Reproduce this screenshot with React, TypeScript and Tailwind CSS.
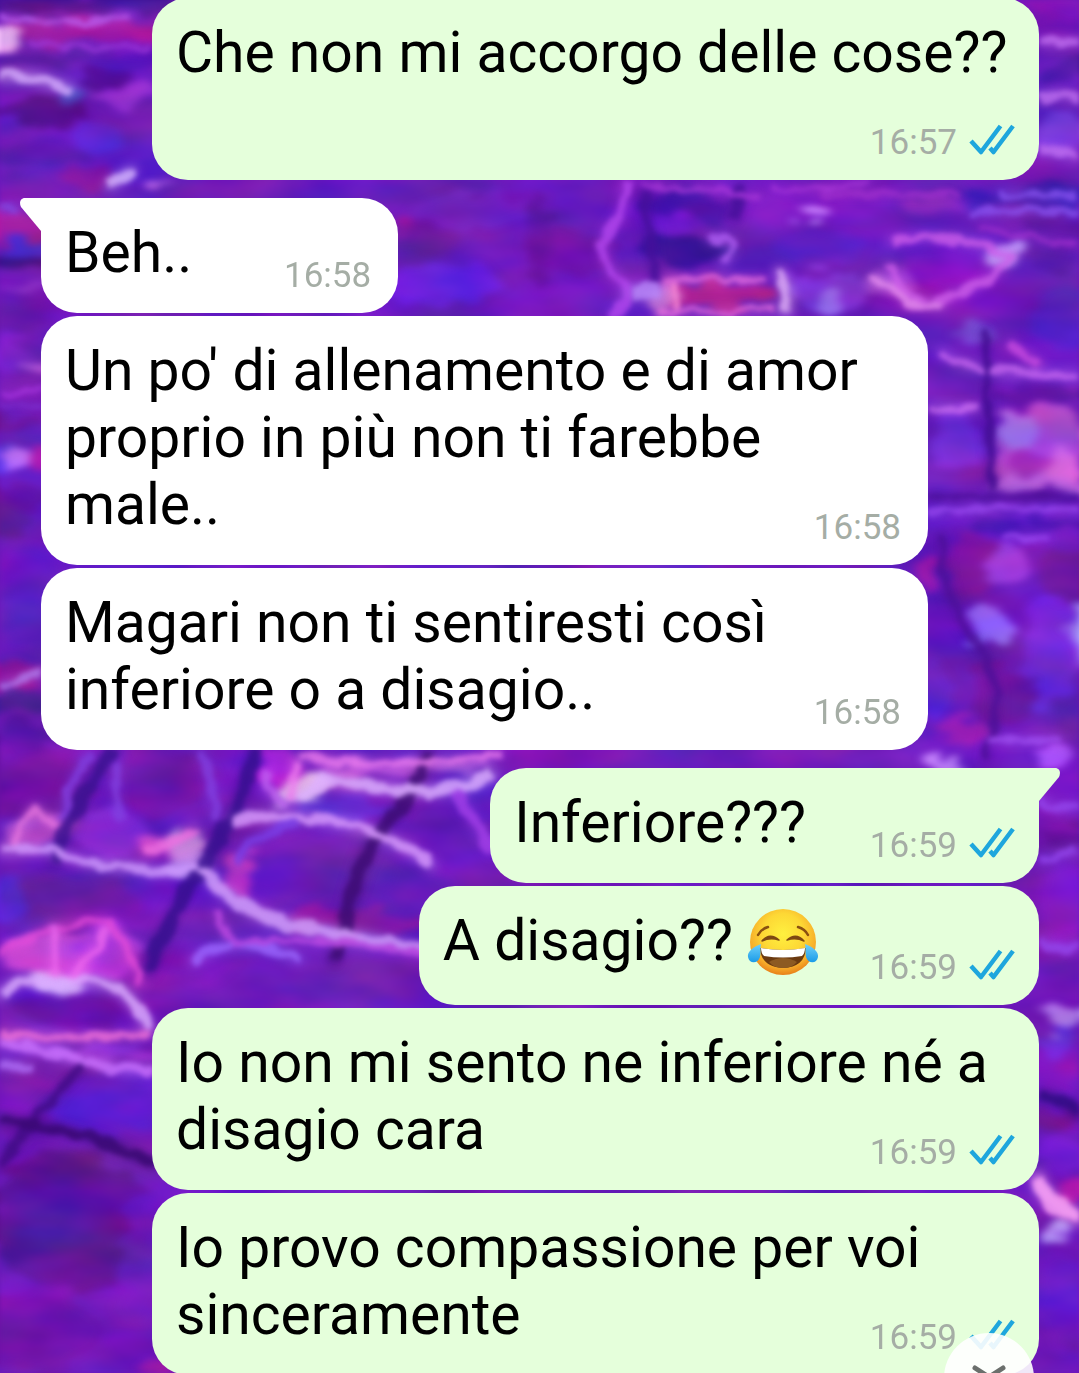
import React from 'react';

type Message = {
  text: string;
  time: string;
  mine?: boolean;
  first?: boolean;
  laughing?: boolean;
  spacer: string;
};

const messages: Message[] = [
  { text: 'Che non mi accorgo delle cose??', time: '16:57', mine: true, spacer: 'w-[208px]' },
  { text: 'Beh..', time: '16:58', first: true, spacer: 'w-[181px]' },
  { text: "Un po' di allenamento e di amor proprio in più non ti farebbe male..", time: '16:58', spacer: 'w-[181px]' },
  { text: 'Magari non ti sentiresti così inferiore o a disagio..', time: '16:58', spacer: 'w-[181px]' },
  { text: 'Inferiore???', time: '16:59', mine: true, first: true, spacer: 'w-[208px]' },
  { text: 'A disagio?? ', time: '16:59', mine: true, laughing: true, spacer: 'w-[195px]' },
  { text: 'Io non mi sento ne inferiore né a disagio cara', time: '16:59', mine: true, spacer: 'w-[208px]' },
  { text: 'Io provo compassione per voi sinceramente', time: '16:59', mine: true, spacer: 'w-[208px]' },
];

// cx, cy, rx, ry, colour, opacity
const glows: [number, number, number, number, string, number][] = [
  [80, 3, 110, 10, '#3a1090', 0.9],
  [75, 32, 80, 12, '#a810a0', 0.9],
  [4, 38, 16, 10, '#ffc8ff', 1],
  [75, 60, 100, 9, '#4a16a8', 0.8],
  [45, 112, 40, 15, '#4a0a78', 0.9],
  [104, 76, 26, 8, '#48067c', 0.9],
  [73, 96, 12, 9, '#3c50c8', 0.8],
  [130, 94, 36, 9, '#a838e0', 0.8],
  [95, 134, 22, 14, '#5828d8', 0.8],
  [40, 155, 50, 16, '#4c18a8', 0.8],
  [90, 180, 30, 12, '#901098', 0.9],
  [155, 185, 12, 7, '#f080f0', 0.8],
  [18, 228, 44, 14, '#b418a4', 1],
  [30, 247, 34, 7, '#5c28e0', 1],
  [20, 263, 40, 9, '#400c88', 1],
  [28, 286, 30, 5, '#8838d0', 0.9],
  [20, 315, 34, 20, '#6818a4', 0.8],
  [10, 352, 28, 14, '#8020d8', 0.9],
  [34, 367, 16, 6, '#c058f0', 1],
  [10, 422, 34, 8, '#700c88', 0.8],
  [32, 435, 24, 12, '#5020b8', 0.7],
  [2, 461, 16, 12, '#5c38e8', 1],
  [20, 461, 14, 8, '#d078ff', 1],
  [42, 460, 12, 14, '#b014a4', 1],
  [20, 495, 36, 12, '#700c90', 0.8],
  [8, 520, 24, 16, '#601888', 0.8],
  [30, 600, 26, 50, '#5c18bc', 0.9],
  [10, 676, 32, 11, '#980c98', 1],
  [20, 702, 40, 14, '#3c1c9c', 1],
  [20, 738, 50, 14, '#54109c', 0.9],
  [440, 285, 60, 20, '#701ee8', 0.9],
  [480, 210, 70, 16, '#7828d8', 0.7],
  [404, 225, 12, 14, '#b010a0', 0.9],
  [420, 240, 40, 16, '#701898', 0.5],
  [570, 250, 50, 20, '#700c98', 0.8],
  [540, 240, 14, 50, '#540c88', 0.6],
  [690, 205, 50, 14, '#3c14a0', 0.9],
  [685, 250, 44, 16, '#30109c', 1],
  [665, 228, 30, 9, '#8020d8', 0.8],
  [718, 295, 56, 12, '#c81888', 1],
  [665, 295, 8, 18, '#ff90d8', 0.8],
  [820, 245, 46, 18, '#6020d0', 0.7],
  [812, 211, 16, 10, '#c098ff', 1],
  [830, 290, 40, 18, '#9040f0', 0.8],
  [832, 300, 12, 9, '#b090ff', 0.8],
  [950, 265, 46, 22, '#7c10c0', 0.8],
  [1008, 256, 20, 11, '#d0a8ff', 1],
  [1030, 197, 60, 11, '#3418b0', 0.9],
  [930, 205, 34, 9, '#a828c8', 0.8],
  [1050, 240, 30, 30, '#5a0e98', 0.8],
  [890, 282, 26, 12, '#c050e0', 0.7],
  [977, 331, 16, 15, '#7058d8', 0.8],
  [1060, 320, 30, 30, '#5028c8', 0.7],
  [1040, 393, 55, 12, '#4a10a0', 0.9],
  [1040, 448, 50, 42, '#d060e0', 0.8],
  [1020, 430, 22, 16, '#b890f8', 0.8],
  [1060, 465, 22, 16, '#f088e8', 0.7],
  [1030, 460, 16, 16, '#a020b0', 0.6],
  [955, 440, 22, 36, '#8030e8', 0.7],
  [1040, 484, 60, 7, '#d078f0', 0.9],
  [970, 508, 60, 6, '#4810a0', 0.8],
  [1030, 525, 60, 8, '#4410a0', 0.9],
  [970, 565, 30, 34, '#901498', 0.8],
  [930, 570, 10, 20, '#c018a8', 0.9],
  [1010, 568, 18, 24, '#a848f0', 0.8],
  [1066, 575, 22, 30, '#6c1890', 0.9],
  [989, 628, 21, 22, '#9878ff', 1],
  [1080, 630, 10, 28, '#b0b0ff', 1],
  [1050, 650, 28, 60, '#7828f0', 0.7],
  [1004, 695, 34, 34, '#780c94', 0.8],
  [935, 690, 12, 34, '#5c28e0', 0.7],
  [1074, 720, 14, 30, '#5c18a8', 0.8],
  [965, 732, 24, 12, '#b01ca8', 0.9],
  [940, 762, 22, 8, '#d8a0ff', 0.9],
  [1055, 757, 16, 9, '#b860ff', 0.9],
  [160, 780, 50, 36, '#7c10a0', 0.8],
  [110, 835, 34, 24, '#9030e0', 0.8],
  [30, 785, 60, 34, '#68109c', 0.8],
  [40, 828, 34, 16, '#d860d8', 0.7],
  [170, 846, 32, 12, '#e858d8', 0.9],
  [186, 850, 18, 24, '#d0a8f0', 0.9],
  [278, 770, 20, 20, '#d028d8', 0.9],
  [305, 790, 30, 14, '#fff0ff', 0.9],
  [400, 768, 90, 9, '#d868e8', 0.7],
  [350, 808, 50, 10, '#5830d8', 0.8],
  [315, 868, 80, 40, '#661cb8', 0.9],
  [240, 875, 18, 22, '#e838b8', 0.9],
  [370, 922, 80, 14, '#a014a0', 0.9],
  [410, 890, 40, 30, '#541cb4', 0.8],
  [70, 900, 70, 26, '#7c14a8', 0.8],
  [6, 900, 20, 24, '#5c24e0', 0.9],
  [190, 960, 46, 20, '#7814c0', 0.8],
  [55, 955, 50, 28, '#e850e0', 0.9],
  [110, 950, 28, 30, '#b838e8', 0.9],
  [70, 1010, 56, 16, '#68109c', 1],
  [55, 984, 24, 9, '#fff0ff', 0.8],
  [110, 1053, 60, 9, '#9838e8', 0.9],
  [110, 1105, 60, 34, '#5a1cd0', 0.8],
  [20, 1095, 34, 20, '#7814b8', 0.8],
  [70, 1220, 80, 70, '#5c108c', 0.9],
  [140, 1260, 20, 70, '#6020c8', 0.7],
  [30, 1330, 70, 46, '#7010a4', 0.8],
  [155, 1368, 18, 12, '#b020a8', 0.8],
  [1065, 1020, 20, 13, '#c0a0ff', 0.9],
  [1058, 1042, 20, 12, '#5c38e8', 0.8],
  [1060, 1075, 22, 12, '#8010b0', 0.9],
  [1050, 1120, 28, 12, '#70148c', 0.9],
  [1065, 1155, 24, 20, '#8018d8', 0.8],
  [1072, 1195, 14, 12, '#c018b0', 0.9],
  [1057, 1230, 15, 12, '#c8b0ff', 1],
  [1065, 1300, 30, 50, '#7414c8', 0.8],
  [1065, 900, 26, 40, '#7418d0', 0.8],
  [1065, 840, 24, 12, '#48109c', 0.8],
  [1060, 10, 34, 12, '#8818b0', 0.8],
  [1064, 70, 30, 12, '#401498', 0.9],
  [1062, 130, 30, 18, '#9048e8', 0.7],
];

// path, colour, stroke width
const strands: [string, string, number][] = [
  ['M0 17C40 26 80 24 130 15', '#b860f0', 5],
  ['M30 42Q90 52 150 46', '#9c38d8', 5],
  ['M0 76C30 74 50 82 72 90', '#d8b0ff', 9],
  ['M110 184L132 171', '#d8b8ff', 10],
  ['M0 392L41 390', '#a838e0', 6],
  ['M0 405H41', '#7c30d0', 4],
  ['M0 686L41 673', '#b080f0', 6],
  ['M0 208H20', '#8448e0', 7],
  ['M627 183C622 200 628 215 610 228C598 242 602 268 622 282C630 294 625 305 612 315', '#b448ee', 8],
  ['M645 192L655 282M740 185L735 220', '#45109a', 9],
  ['M710 240C740 235 735 254 722 264', '#b060f4', 7],
  ['M665 279H765M660 310Q710 314 775 308', '#ec70e0', 5],
  ['M674 282V308', '#ff90d8', 6],
  ['M779 272Q791 290 786 312', '#e0b0f8', 10],
  ['M632 292H658', '#b888f8', 14],
  ['M770 188Q820 194 870 182M640 184Q700 188 760 197', '#a838d8', 5],
  ['M890 241C930 233 970 236 1012 257C990 282 950 300 930 304C910 300 895 282 888 265', '#cf60ea', 7],
  ['M870 282Q895 280 908 304L942 305', '#e890f0', 7],
  ['M970 212H1079M1000 195H1079', '#8a54f0', 6],
  ['M980 228L1079 246M820 195H960', '#a030cc', 5],
  ['M940 352C970 374 1010 372 1079 376', '#c868f0', 7],
  ['M930 408H978', '#cc70f0', 6],
  ['M1010 345L1040 365', '#c84ce0', 8],
  ['M985 330Q990 430 993 490', '#400c90', 6],
  ['M928 497H1079', '#4b1098', 5],
  ['M928 514Q1000 504 1079 512M1005 537H1048', '#9a48f0', 6],
  ['M942 535Q940 600 975 640T986 760', '#4c1098', 7],
  ['M990 740H1060', '#a050f0', 6],
  ['M90 752Q70 780 62 820M200 752Q214 775 214 820M118 765Q112 800 122 820', '#8140e0', 8],
  ['M255 750C245 800 220 840 195 878S165 930 148 970', '#35108e', 12],
  ['M114 748Q75 800 54 862', '#3a1290', 11],
  ['M428 752C420 785 392 818 375 838C356 865 352 905 334 960', '#3c0c72', 12],
  ['M0 850H50C80 864 110 867 135 867Q160 878 200 866', '#d09cff', 8],
  ['M10 846L34 808L58 826', '#e878e0', 7],
  ['M145 852Q175 845 195 828', '#f070e0', 8],
  ['M232 820C280 812 350 818 388 839Q412 850 432 866', '#dca0ff', 8],
  ['M236 862Q260 828 296 823', '#7a40e8', 9],
  ['M204 868C220 898 245 904 270 920Q330 932 430 952', '#d2a0fc', 11],
  ['M300 797L325 778Q350 784 400 790T492 775', '#ddb0ff', 11],
  ['M296 762L292 798M300 756Q390 774 500 754', '#ec7cee', 7],
  ['M270 770Q255 795 290 805', '#bd60f0', 7],
  ['M455 790L492 850', '#a340e8', 10],
  ['M192 962Q235 930 300 960', '#9c68ff', 8],
  ['M215 910L232 945Q310 932 430 955', '#c14ce4', 6],
  ['M0 955Q50 920 110 922Q130 950 140 985', '#e44cd8', 7],
  ['M72 978L108 930M53 925V975', '#ee68ee', 7],
  ['M0 995Q20 974 40 982L58 989L76 980Q110 980 126 994L150 1028', '#dcaeff', 9],
  ['M0 1034Q70 1040 150 1034', '#f474d8', 7],
  ['M0 1044C40 1042 80 1070 152 1070', '#cc74ff', 9],
  ['M0 1064L30 1068', '#b070f8', 7],
  ['M84 1066Q40 1110 30 1124Q18 1140 0 1168', '#400c84', 8],
  ['M0 1120Q90 1130 154 1164', '#35086e', 9],
  ['M1040 1095Q1060 1098 1079 1114', '#2e0c80', 11],
  ['M1038 1178Q1040 1198 1079 1218', '#ffa8f8', 14],
  ['M1040 800Q1060 815 1079 805M1040 860L1079 850M1040 940Q1065 955 1079 945', '#9448ee', 8],
  ['M1040 42H1079M1040 98Q1060 90 1079 100M1040 150L1079 156', '#c070f0', 8],
];

const Strands = () => (
  <>
    {strands.map(([d, stroke, width], i) => (
      <path key={i} d={d} stroke={stroke} strokeWidth={width} />
    ))}
  </>
);

const Wallpaper = () => (
  <svg
    className="absolute inset-0 h-full w-full"
    viewBox="0 0 1079 1373"
    preserveAspectRatio="xMidYMid slice"
    aria-hidden="true"
  >
    <defs>
      <filter id="grain" x="0" y="0" width="100%" height="100%" colorInterpolationFilters="sRGB">
        <feTurbulence type="fractalNoise" baseFrequency="0.01 0.022" numOctaves="3" seed="8" />
        <feColorMatrix values="1.5 0 0 0 -0.3  0 0.6 0 0 -0.14  0 0 1.2 0 0.15  0 0 0 0 1" />
        <feGaussianBlur stdDeviation="2" />
      </filter>
      <filter id="soft" filterUnits="userSpaceOnUse" x="-40" y="-40" width="1160" height="1460" colorInterpolationFilters="sRGB">
        <feTurbulence type="fractalNoise" baseFrequency="0.03 0.05" numOctaves="3" seed="5" />
        <feDisplacementMap in="SourceGraphic" scale="34" xChannelSelector="R" yChannelSelector="G" />
        <feGaussianBlur stdDeviation="5 3" />
      </filter>
      <filter id="halo" filterUnits="userSpaceOnUse" x="0" y="0" width="1079" height="1373" colorInterpolationFilters="sRGB">
        <feGaussianBlur stdDeviation="6" />
      </filter>
      <filter id="wavy" filterUnits="userSpaceOnUse" x="0" y="0" width="1079" height="1373" colorInterpolationFilters="sRGB">
        <feTurbulence type="fractalNoise" baseFrequency="0.05" numOctaves="2" seed="3" />
        <feDisplacementMap in="SourceGraphic" scale="14" xChannelSelector="R" yChannelSelector="G" />
        <feGaussianBlur stdDeviation="2.6" />
      </filter>
    </defs>
    <rect width="1079" height="1373" fill="#6a18ba" />
    <g filter="url(#soft)">
      {glows.map(([cx, cy, rx, ry, fill, opacity], i) => (
        <ellipse key={i} cx={cx} cy={cy} rx={rx} ry={ry} fill={fill} opacity={opacity} />
      ))}
    </g>
    <rect width="1079" height="1373" filter="url(#grain)" opacity="0.22" />
    <g fill="none" strokeLinecap="round" opacity="0.7" filter="url(#halo)">
      <Strands />
    </g>
    <g fill="none" strokeLinecap="butt" opacity="0.72" filter="url(#wavy)">
      <Strands />
    </g>
  </svg>
);

const ReadTicks = () => (
  <svg className="h-[42px] w-[46px]" viewBox="0 0 46 42" fill="none" stroke="#1ea6dd" strokeWidth="4.500" role="img" aria-label="Letto">
    <path d="M2 19L12 30L31.500 4M21 26L24.500 30L44 4" strokeLinejoin="round" />
  </svg>
);

const Tail = ({ mine }: { mine?: boolean }) => (
  <svg
    className={mine ? 'absolute top-0 left-full h-[33px] w-[21px] -scale-x-100' : 'absolute top-0 right-full h-[33px] w-[21px]'}
    viewBox="0 0 21 33"
    fill={mine ? '#e5ffdb' : '#ffffff'}
    aria-hidden="true"
  >
    <path d="M21 0H5C0 0-1 5 1 9L21 33Z" />
  </svg>
);

const JoyFace = () => (
  <svg className="inline-block h-[71px] w-[72px] align-[-18px]" viewBox="0 0 72 71" role="img" aria-label="😂">
    <defs>
      <radialGradient id="face" cx="0.5" cy="0.38" r="0.62">
        <stop offset="0" stopColor="#fff03f" />
        <stop offset="0.5" stopColor="#fdd835" />
        <stop offset="0.82" stopColor="#f7ad2a" />
        <stop offset="1" stopColor="#e8801a" />
      </radialGradient>
      <linearGradient id="tear" x1="0" y1="0" x2="0" y2="1">
        <stop offset="0" stopColor="#6fd0fa" />
        <stop offset="1" stopColor="#1a9be8" />
      </linearGradient>
    </defs>
    <circle cx="36" cy="35" r="33" fill="url(#face)" />
    <g fill="none" stroke="#8a5010" strokeLinecap="round">
      <path d="M11 28Q14 22 21 20M61 28Q58 22 51 20" strokeWidth="2.500" />
    </g>
    <path d="M15 34Q23 25 32 33Q23 30 15 34ZM40 33Q49 25 57 34Q49 30 40 33Z" fill="#7d4812" stroke="#7d4812" strokeWidth="1.500" strokeLinejoin="round" />
    <path d="M13 41Q36 45 59 41Q58 60 36 61Q14 60 13 41Z" fill="#6b3a10" />
    <path d="M22 55Q36 47 50 55Q45 61 36 61Q27 61 22 55Z" fill="#8d5a22" />
    <path d="M14 41Q36 45 58 41Q58 46 55 49Q36 52 17 49Q14 46 14 41Z" fill="#fff" />
    <path d="M14 37C6 40 0 45 1 50C2 57 11 57 13 50C14 46 13 41 14 37Z" fill="url(#tear)" />
    <path d="M58 37C66 40 72 45 71 50C70 57 61 57 59 50C58 46 59 41 58 37Z" fill="url(#tear)" />
  </svg>
);

const Bubble = ({ message }: { message: Message }) => {
  const { text, time, mine, first, laughing, spacer } = message;
  const side = mine ? 'self-end bg-[#e5ffdb]' : 'self-start bg-white';
  const corner = first ? (mine ? 'rounded-tr-none mt-[15px]' : 'rounded-tl-none mt-[15px]') : '';
  const stamp = mine ? 'right-[24px]' : 'right-[27px]';

  return (
    <li className={`relative max-w-[887px] rounded-[36px] pt-[21px] pr-[25px] pb-[27px] pl-[24px] ${side} ${corner}`}>
      {first && <Tail mine={mine} />}
      <p className="text-[57px] leading-[67px] text-black">
        {text}
        {laughing && <JoyFace />}
        <span className={`inline-block h-px ${spacer}`} />
      </p>
      <div className={`absolute bottom-[16px] flex gap-3 ${stamp}`}>
        <time className="text-[35px] leading-[42px] text-[#a5ada5]">{time}</time>
        {mine && <ReadTicks />}
      </div>
    </li>
  );
};

const App = () => {
  return (
    <main className="relative h-screen overflow-hidden bg-[#6a18ba] font-['Roboto',sans-serif]">
      <Wallpaper />
      <ul className="relative -mt-0.5 flex flex-col gap-[3px] pr-10 pl-[41px]">
        {messages.map((message, i) => (
          <Bubble key={i} message={message} />
        ))}
      </ul>
      <button
        type="button"
        aria-label="Vai in fondo"
        className="absolute right-[45px] -bottom-[50px] flex size-[90px] items-center justify-center rounded-full bg-white/90"
      >
        <svg className="size-[36px]" viewBox="0 0 36 36" fill="none" stroke="#6b6f6c" strokeWidth="5" strokeLinecap="round" aria-hidden="true">
          <path d="M4 8L18 17L32 8M4 22L18 31L32 22" />
        </svg>
      </button>
    </main>
  );
};

export default App;
